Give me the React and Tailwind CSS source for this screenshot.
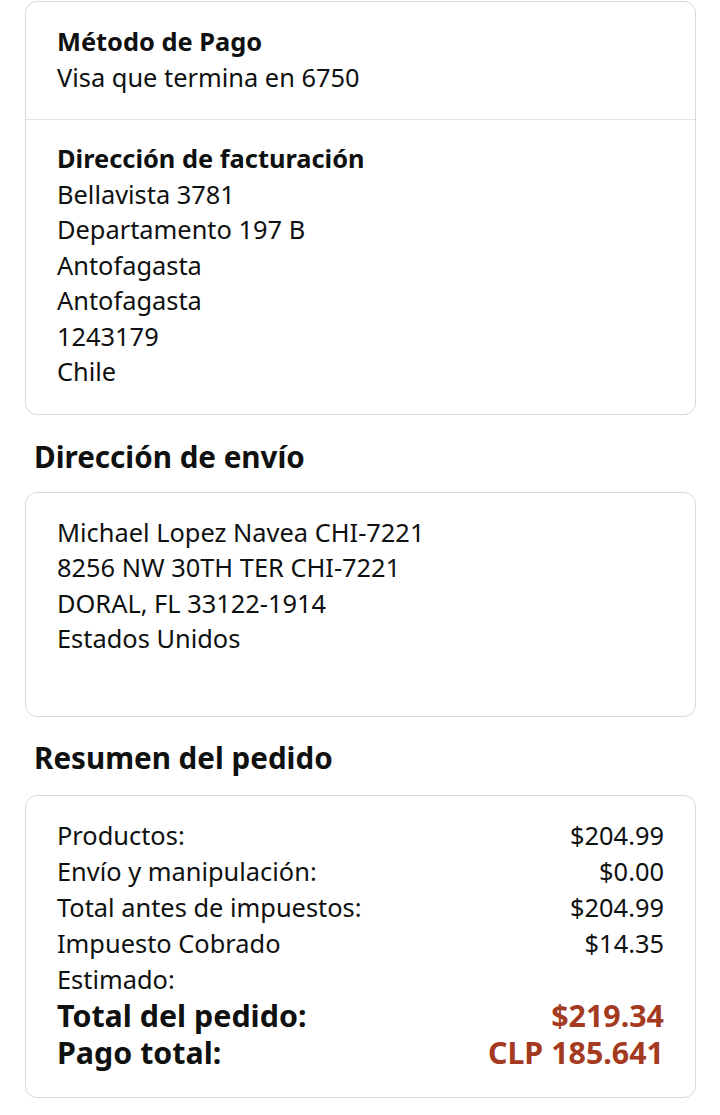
import React from "react";

const font = { fontFamily: '"Noto Sans", "Open Sans", sans-serif' };

export default function App() {
  return (
    <div className="w-[720px] h-[1115px] bg-white text-[#0f1111] overflow-hidden" style={font}>
      <div className="pl-[25px] pr-[24px] pt-px">
        {/* Payment card */}
        <div className="border border-[#d5d9d9] rounded-[12px] bg-white">
          <div className="px-[31px] pt-[22px] pb-[24px] text-[25.4px] leading-[35.5px]">
            <div className="font-bold">Método de Pago</div>
            <div>Visa que termina en 6750</div>
          </div>
          <div className="border-t border-[#e3e6e6]" />
          <div className="px-[31px] pt-[21px] pb-[24px] text-[25.4px] leading-[35.5px]">
            <div className="font-bold">Dirección de facturación</div>
            <div>Bellavista 3781</div>
            <div>Departamento 197 B</div>
            <div>Antofagasta</div>
            <div>Antofagasta</div>
            <div>1243179</div>
            <div>Chile</div>
          </div>
        </div>

        <h2 className="pl-[9px] mt-[22px] mb-[15px] text-[29.6px] leading-[40px] font-bold">Dirección de envío</h2>

        <div className="border border-[#d5d9d9] rounded-[12px] bg-white px-[31px] pt-[22px] pb-[59px] text-[25.4px] leading-[35.5px]">
          <div>Michael Lopez Navea CHI-7221</div>
          <div>8256 NW 30TH TER CHI-7221</div>
          <div>DORAL, FL 33122-1914</div>
          <div>Estados Unidos</div>
        </div>

        <h2 className="pl-[9px] mt-[21px] mb-[17px] text-[29.6px] leading-[40px] font-bold">Resumen del pedido</h2>

        <div className="border border-[#d5d9d9] rounded-[12px] bg-white px-[31px] pt-[21px] pb-[26px]">
          <div className="text-[25.4px] leading-[36px]">
            <div className="flex justify-between"><span>Productos:</span><span>$204.99</span></div>
            <div className="flex justify-between"><span>Envío y manipulación:</span><span>$0.00</span></div>
            <div className="flex justify-between"><span>Total antes de impuestos:</span><span>$204.99</span></div>
            <div className="flex justify-between items-start">
              <span>Impuesto Cobrado<br />Estimado:</span>
              <span>$14.35</span>
            </div>
          </div>
          <div className="text-[30.4px] leading-[37px] font-bold">
            <div className="flex justify-between"><span>Total del pedido:</span><span className="text-[#a43a1f]">$219.34</span></div>
            <div className="flex justify-between"><span>Pago total:</span><span className="text-[#a43a1f]">CLP 185.641</span></div>
          </div>
        </div>
      </div>
    </div>
  );
}
